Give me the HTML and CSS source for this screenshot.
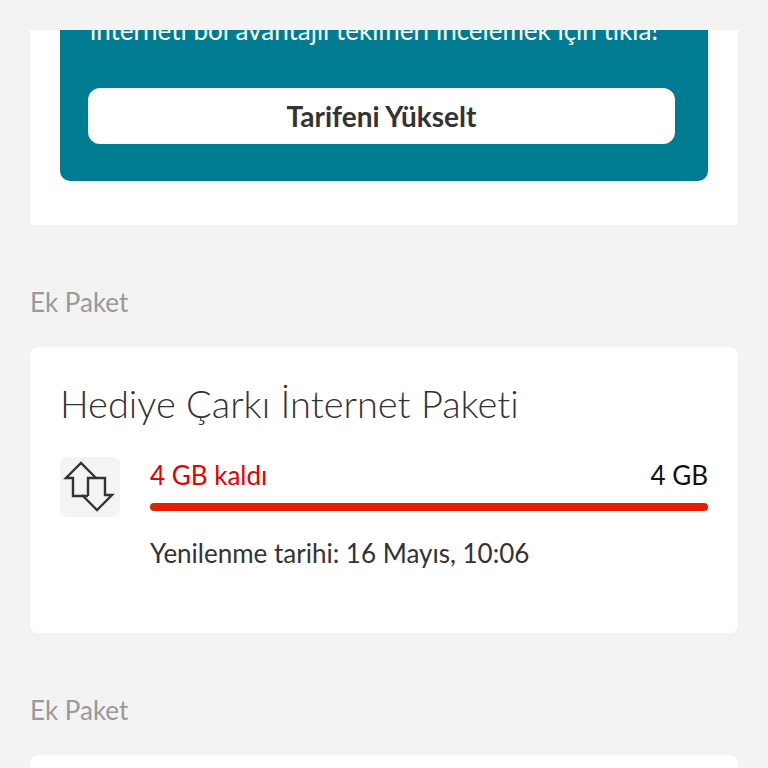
FILE: index.html
```
<!DOCTYPE html>
<html lang="tr">
<head>
  <meta charset="UTF-8">
  <meta name="viewport" content="width=device-width, initial-scale=1">
  <title>Paketlerim</title>
  <link rel="stylesheet" href="styles.css">
</head>
<body>
  <main class="page">
    <section class="card offer-card">
      <div class="offer">
        <p class="offer-text">interneti bol avantajlı teklifleri incelemek için tıkla!</p>
        <button type="button" class="offer-button">Tarifeni Yükselt</button>
      </div>
    </section>

    <h2 class="section-title">Ek Paket</h2>
    <section class="card package">
      <h3 class="package-name">Hediye Çarkı İnternet Paketi</h3>
      <div class="package-body">
        <div class="package-icon">
          <svg viewBox="0 0 60 60" fill="none" stroke="#333" stroke-width="2.4" aria-hidden="true">
            <path d="M28 39 H13 V21 H6 L21 6 L36 21"/>
            <path d="M28 39 V21 H45 V38 H52 L37 53 L22 38"/>
          </svg>
        </div>
        <div class="usage">
          <div class="usage-row">
            <span class="usage-left">4 GB kaldı</span>
            <span class="usage-total">4 GB</span>
          </div>
          <div class="usage-bar"><div class="usage-fill" style="width: 100%"></div></div>
          <p class="renewal">Yenilenme tarihi: 16 Mayıs, 10:06</p>
        </div>
      </div>
    </section>

    <h2 class="section-title">Ek Paket</h2>
    <section class="card next-package"></section>
  </main>
</body>
</html>
```

FILE: styles.css
```
* {
  box-sizing: border-box;
}
body {
  margin: 0;
  background-color: #f3f3f3;
  color: #333333;
  font-family: Lato, "Noto Sans", sans-serif;
  font-size: 26px;
  font-weight: 400;
  font-variant-ligatures: none;
}
h2, h3, p {
  margin: 0;
}
.page {
  display: flex;
  flex-direction: column;
  min-height: 100vh;
  padding: 30px 30px 0;
}
.card {
  background-color: #ffffff;
  border-radius: 8px;
}
.offer-card {
  padding: 0 30px 44px;
  border-radius: 0 0 4px 4px;
}
.offer {
  padding: 0 33px 37px 28px;
  border-radius: 0 0 10px 10px;
  background-color: #007c92;
}
/* the last line is scrolled half out of view */
.offer-text {
  display: flex;
  align-items: flex-end;
  height: 18px;
  margin-bottom: 40px;
  padding-left: 2px;
  overflow: hidden;
  color: #ffffff;
  line-height: 36px;
  white-space: nowrap;
}
.offer-button {
  display: block;
  width: 100%;
  height: 56px;
  padding: 0;
  border: 0;
  border-radius: 12px;
  background-color: #ffffff;
  color: #333333;
  font-family: inherit;
  font-size: 28px;
  font-weight: 700;
  line-height: 56px;
}
.section-title {
  padding: 59px 0 27px;
  color: #999999;
  font-size: 26px;
  font-weight: 400;
  line-height: 36px;
}
.package {
  padding: 30px 30px 62px;
}
.next-package {
  flex: 1;
  border-radius: 8px 8px 0 0;
}
.package-name {
  margin-bottom: 28px;
  font-size: 38px;
  font-weight: 300;
  line-height: 52px;
}
.package-body {
  display: flex;
  gap: 30px;
}
.package-icon {
  flex: none;
  width: 60px;
  height: 60px;
  border-radius: 8px;
  background-color: #f4f4f4;
}
.package-icon svg {
  display: block;
}
.usage {
  flex: 1;
}
.usage-row {
  display: flex;
  justify-content: space-between;
  margin-bottom: 10px;
  line-height: 36px;
}
.usage-left {
  color: #e60000;
}
.usage-total {
  color: #111111;
}
.usage-bar {
  height: 8px;
}
.usage-fill {
  height: 8px;
  border-radius: 4px;
  background-color: #e42000;
}
.renewal {
  margin-top: 24px;
  line-height: 36px;
}
```
